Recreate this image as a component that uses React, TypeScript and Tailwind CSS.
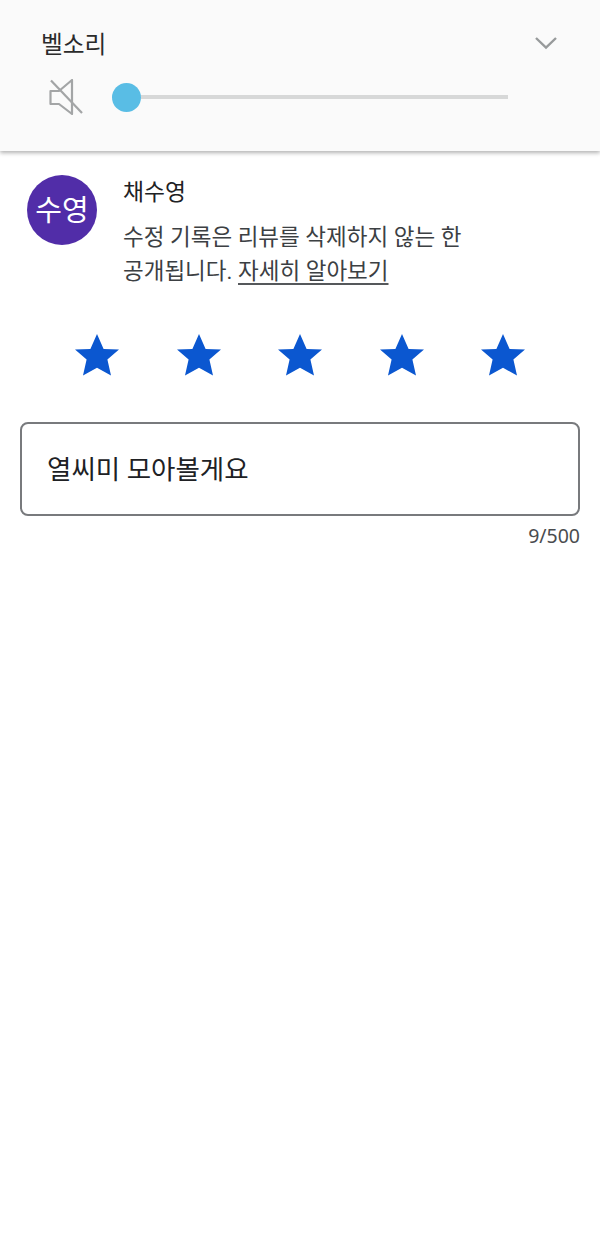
const FONT = "font-['Roboto','Noto_Sans_CJK_KR',sans-serif]"

function Star() {
  return (
    <svg width="44" height="44" viewBox="0 0 44 44" className="text-[#0b57d0]">
      <path d="M22 0 L28.6 15 L44 15.6 L32.4 25.6 L36 41.5 L22 33.8 L8 41.5 L11.6 25.6 L0 15.6 L15.4 15 Z" fill="currentColor" />
    </svg>
  )
}

function MutedSpeaker() {
  return (
    <svg width="34" height="36" viewBox="0 0 34 36" fill="none" stroke="#a3a5a6" strokeWidth="2.2">
      <path d="M1.5 12 V25 H10 L23 35 V1 L10 12 Z" strokeLinejoin="round" />
      <path d="M2 1.5 L33 34" />
    </svg>
  )
}

export default function App() {
  return (
    <div className={`h-[1233px] w-[600px] overflow-hidden bg-white ${FONT}`}>
      <section className="h-[151px] bg-[#fafafa] pl-[41px] pr-[41px] pt-[30px] shadow-[0_2px_4px_rgba(0,0,0,0.3)]">
        <div className="flex items-center justify-between">
          <h2 className="text-[23.7px] leading-[30px] text-[#2b2b2b]">벨소리</h2>
          <svg width="24" height="14" viewBox="0 0 24 14" fill="none" stroke="#979a9b" strokeWidth="2.4" className="-mt-[5px] mr-[1px]">
            <path d="M2 2 L12 11.5 L22 2" />
          </svg>
        </div>
        <div className="mt-[19px] flex items-center pl-[8px]">
          <MutedSpeaker />
          <div className="ml-[29px] flex items-center">
            <div className="h-[29px] w-[29px] rounded-full bg-[#59bde5]" />
            <div className="h-[4px] w-[367px] bg-[#d7d8d8]" />
          </div>
        </div>
      </section>

      <section className="flex pl-[27px] pt-[24px]">
        <div className="flex h-[70px] w-[70px] shrink-0 items-center justify-center rounded-full bg-[#512da8] pt-[3px] text-[29px] text-white">
          수영
        </div>
        <div className="ml-[26px] mt-[3px]">
          <div className="text-[22.8px] leading-[30px] text-[#202124]">채수영</div>
          <p className="mt-[12px] w-[350px] text-[22.5px] leading-[34px] text-[#3c4043]">
            수정 기록은 리뷰를 삭제하지 않는 한
            <br />
            공개됩니다. <span className="underline decoration-[#55585b] underline-offset-[4px]">자세히 알아보기</span>
          </p>
        </div>
      </section>

      <section className="mt-[46px] flex justify-between pl-[75px] pr-[75px]">
        <Star />
        <Star />
        <Star />
        <Star />
        <Star />
      </section>

      <section className="mx-[20px] mt-[44px]">
        <div className="flex h-[94px] items-center rounded-[8px] border-2 border-[#787a7d] pl-[25px] pt-[2px] text-[26.5px] text-[#202124]">
          열씨미 모아볼게요
        </div>
        <div className="mt-[7px] text-right font-['Noto_Sans',sans-serif] text-[19.5px] leading-[26px] text-[#4a4c4f]">9/500</div>
      </section>
    </div>
  )
}
